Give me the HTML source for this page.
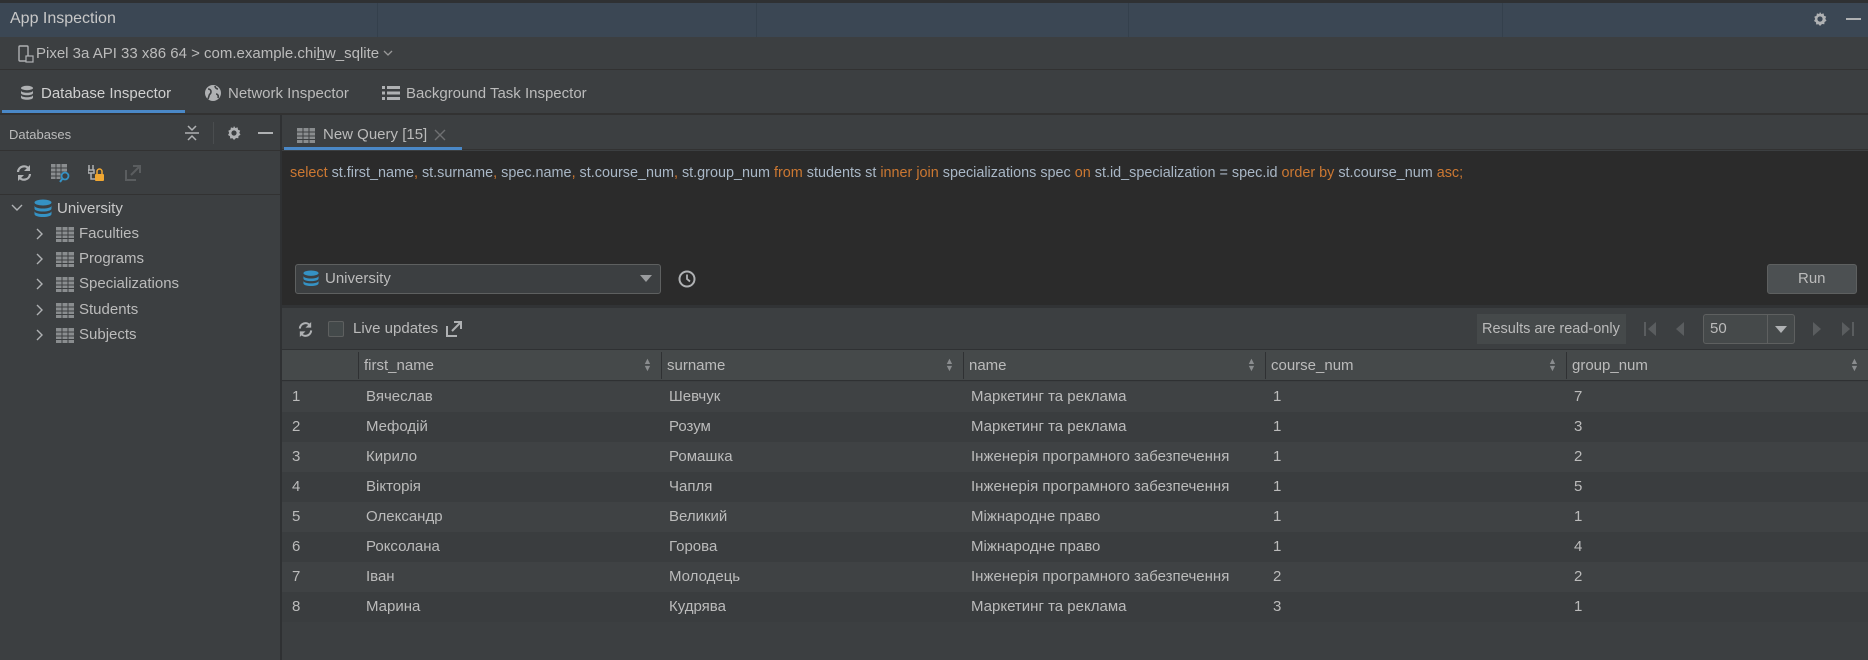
<!DOCTYPE html>
<html><head><meta charset="utf-8"><style>
*{margin:0;padding:0;box-sizing:border-box}
body{width:1868px;height:660px;overflow:hidden;background:#3c3f41;font-family:"Liberation Sans","DejaVu Sans",sans-serif;font-size:15px;color:#bbbbbb;position:relative}
.a{position:absolute}
.t{position:absolute;white-space:nowrap;line-height:18px}
.k{color:#cc7832}
svg{position:absolute}
.row{position:absolute;left:282px;width:1586px;height:30px}
.row span{position:absolute;top:6px;white-space:nowrap}
.hd span{position:absolute;top:7px}
</style></head><body>
<div class="a" style="left:0;top:0;width:1868px;height:3px;background:#2f3133"></div>
<div class="a" style="left:0;top:3px;width:1868px;height:34px;background:#3b4754"></div>
<div class="a" style="left:377px;top:3px;width:1px;height:34px;background:#34404c"></div>
<div class="a" style="left:756px;top:3px;width:1px;height:34px;background:#34404c"></div>
<div class="a" style="left:1128px;top:3px;width:1px;height:34px;background:#34404c"></div>
<div class="a" style="left:1502px;top:3px;width:1px;height:34px;background:#34404c"></div>
<div class="t" style="left:10px;top:10px;font-size:16px;color:#c8c8c8">App Inspection</div>
<svg style="left:1812px;top:11px" width="16" height="16" viewBox="0 0 16 16"><path d="M8 1l1.3 2 2.3-.6.4 2.3 2.2.9-.9 2.2 1.2 2-2 1.2-.2 2.3-2.3-.3L8 15l-1.5-1.8-2.3.3-.2-2.3-2-1.2 1.2-2-.9-2.2L4.5 4.7l.4-2.3 2.3.6z" fill="#afb1b3"/><circle cx="8" cy="8" r="2.6" fill="#3b4754"/></svg>
<div class="a" style="left:1846px;top:18px;width:15px;height:2px;background:#afb1b3"></div>
<div class="a" style="left:0;top:37px;width:1868px;height:33px;background:#3c3f41;border-bottom:1px solid #323232"></div>
<svg style="left:18px;top:45px" width="16" height="18" viewBox="0 0 16 18"><rect x="1" y="1" width="9" height="15" rx="1" fill="none" stroke="#afb1b3" stroke-width="1.4"/><rect x="8" y="11" width="7" height="6" fill="#3c3f41" stroke="#afb1b3" stroke-width="1.2"/></svg>
<div class="t" style="left:36px;top:45px">Pixel 3a API 33 x86 64 &gt; com.example.chi<u>h</u>w_sqlite</div>
<svg style="left:383px;top:49px" width="10" height="8"><path d="M1 2l4 4 4-4" fill="none" stroke="#999" stroke-width="1.3"/></svg>
<div class="a" style="left:0;top:71px;width:1868px;height:44px;background:#3c3f41;border-bottom:2px solid #323232"></div>
<div class="a" style="left:2px;top:110px;width:183px;height:3px;background:#4a88c7"></div>
<svg style="left:20px;top:85px" width="14" height="16" viewBox="0 0 14 16"><ellipse cx="7" cy="3" rx="6" ry="2.2" fill="#afb1b3"/><path d="M1 5.5c0 3 12 3 12 0v2.5c0 3-12 3-12 0zM1 10c0 3 12 3 12 0v2.5c0 3-12 3-12 0z" fill="#afb1b3"/></svg>
<div class="t" style="left:41px;top:85px;color:#d0d0d0">Database Inspector</div>
<svg style="left:204px;top:84px" width="18" height="18" viewBox="0 0 18 18"><circle cx="9" cy="9" r="8" fill="#afb1b3"/><path d="M4 5c2 0 3 1 3 3s-2 2-2 4l-1 3M11 2c0 2 2 3 3 3M12 10c1 0 3 1 2 4" fill="none" stroke="#3c3f41" stroke-width="1.6"/></svg>
<div class="t" style="left:228px;top:85px">Network Inspector</div>
<svg style="left:382px;top:86px" width="18" height="14" viewBox="0 0 18 14"><g fill="#afb1b3"><rect x="0" y="0" width="3" height="3"/><rect x="5" y="0" width="13" height="3"/><rect x="0" y="5.5" width="3" height="3"/><rect x="5" y="5.5" width="13" height="3"/><rect x="0" y="11" width="3" height="3"/><rect x="5" y="11" width="13" height="3"/></g></svg>
<div class="t" style="left:406px;top:85px">Background Task Inspector</div>
<div class="a" style="left:0;top:115px;width:282px;height:545px;background:#3c3f41;border-right:2px solid #2f3133"></div>
<div class="a" style="left:0;top:150px;width:280px;height:1px;background:#323232"></div>
<div class="a" style="left:0;top:194px;width:280px;height:1px;background:#323232"></div>
<div class="t" style="left:9px;top:126px;font-size:13px">Databases</div>
<svg style="left:185px;top:124px" width="14" height="18" viewBox="0 0 14 18"><path d="M0 9h14M3 2l4 4 4-4M3 16l4-4 4 4" fill="none" stroke="#afb1b3" stroke-width="1.5"/></svg>
<div class="a" style="left:213px;top:122px;width:1px;height:22px;background:#4a4d4f"></div>
<svg style="left:226px;top:125px" width="16" height="16" viewBox="0 0 16 16"><path d="M8 1l1.3 2 2.3-.6.4 2.3 2.2.9-.9 2.2 1.2 2-2 1.2-.2 2.3-2.3-.3L8 15l-1.5-1.8-2.3.3-.2-2.3-2-1.2 1.2-2-.9-2.2L4.5 4.7l.4-2.3 2.3.6z" fill="#afb1b3"/><circle cx="8" cy="8" r="2.6" fill="#3c3f41"/></svg>
<div class="a" style="left:258px;top:132px;width:15px;height:2px;background:#afb1b3"></div>
<svg style="left:15px;top:164px" width="18" height="18" viewBox="0 0 18 18"><path d="M3 8a6 6 0 0 1 11-3M15 10a6 6 0 0 1-11 3" fill="none" stroke="#afb1b3" stroke-width="2.2"/><path d="M15 1v6h-6zM3 17v-6h6z" fill="#afb1b3"/></svg>
<svg style="left:51px;top:164px" width="20" height="19" viewBox="0 0 20 19"><rect x="0" y="0" width="16" height="15" fill="#8a8d8f"/><path d="M0 4h16M0 8h16M0 12h16M5 0v15M10 0v15" stroke="#3c3f41" stroke-width="1"/><circle cx="14" cy="12" r="3.5" fill="#3c3f41" stroke="#3592c4" stroke-width="1.8"/><path d="M11.5 14.5L9 18" stroke="#3592c4" stroke-width="2"/></svg>
<svg style="left:88px;top:164px" width="17" height="18" viewBox="0 0 17 18"><path d="M1 1v5M5 1v5M0 6h6v3H0zM3 9v6h4" fill="none" stroke="#afb1b3" stroke-width="1.5"/><rect x="7" y="10" width="9" height="7" rx="1" fill="#f0a732"/><path d="M9 10V7.5a2.5 2.5 0 0 1 5 0V10" fill="none" stroke="#f0a732" stroke-width="1.5"/></svg>
<svg style="left:125px;top:165px" width="16" height="16" viewBox="0 0 16 16"><path d="M1 5v10h10M6 10L15 1M8 1h7v7" fill="none" stroke="#5a5d5f" stroke-width="2"/></svg>
<svg style="left:11px;top:204px" width="12" height="8"><path d="M1 1l5 5 5-5" fill="none" stroke="#afb1b3" stroke-width="1.4"/></svg>
<svg style="left:34px;top:199px" width="18" height="19" viewBox="0 0 18 19"><ellipse cx="9" cy="3.5" rx="8.5" ry="3" fill="#3592c4"/><path d="M.5 6.5c0 4 17 4 17 0v3c0 4-17 4-17 0zM.5 12c0 4 17 4 17 0v3c0 4-17 4-17 0z" fill="#3592c4"/></svg>
<div class="t" style="left:57px;top:200px;color:#c8c8c8">University</div>
<div id="tree"></div>
<div class="a" style="left:282px;top:115px;width:1586px;height:35px;background:#3c3f41;border-bottom:1px solid #323232"></div>
<div class="a" style="left:284px;top:147px;width:178px;height:3px;background:#4a88c7"></div>
<svg style="left:297px;top:128px" width="18" height="15" viewBox="0 0 18 15"><rect x="0" y="0" width="18" height="15" fill="#8a8d8f"/><path d="M0 4h18M0 8h18M0 11.5h18M6 0v15M12 0v15" stroke="#3c3f41" stroke-width="1"/></svg>
<div class="t" style="left:323px;top:126px;font-size:15px">New Query [15]</div>
<svg style="left:434px;top:129px" width="12" height="12"><path d="M1 1l10 10M11 1L1 11" stroke="#6e7072" stroke-width="1.4"/></svg>
<div class="a" style="left:282px;top:151px;width:1586px;height:154px;background:#2b2b2b"></div>
<div class="t" style="left:290px;top:164px;font-size:14.4px;color:#a9b7c6"><span class="k">select</span> st.first_name<span class="k">,</span> st.surname<span class="k">,</span> spec.name<span class="k">,</span> st.course_num<span class="k">,</span> st.group_num <span class="k">from</span> students st <span class="k">inner join</span> specializations spec <span class="k">on</span> st.id_specialization = spec.id <span class="k">order by</span> st.course_num <span class="k">asc;</span></div>
<div class="a" style="left:295px;top:264px;width:366px;height:30px;background:#3c3f41;border:1px solid #5e6060;border-radius:3px"></div>
<svg style="left:303px;top:269px" width="16" height="19" viewBox="0 0 18 19"><ellipse cx="9" cy="3.5" rx="8.5" ry="3" fill="#3592c4"/><path d="M.5 6.5c0 4 17 4 17 0v3c0 4-17 4-17 0zM.5 12c0 4 17 4 17 0v3c0 4-17 4-17 0z" fill="#3592c4"/></svg>
<div class="t" style="left:325px;top:270px">University</div>
<svg style="left:640px;top:275px" width="12" height="8"><path d="M0 0h12L6 7z" fill="#9a9c9e"/></svg>
<svg style="left:678px;top:270px" width="18" height="18" viewBox="0 0 18 18"><circle cx="9" cy="9" r="7.5" fill="none" stroke="#afb1b3" stroke-width="2"/><path d="M9 4.5V9l3 2.5" fill="none" stroke="#afb1b3" stroke-width="1.8"/></svg>
<div class="a" style="left:1767px;top:264px;width:90px;height:30px;background:#4c5052;border:1px solid #5e6060;border-radius:3px"></div>
<div class="t" style="left:1798px;top:270px">Run</div>
<div class="a" style="left:282px;top:305px;width:1586px;height:3px;background:#313335"></div>
<svg style="left:297px;top:321px" width="17" height="17" viewBox="0 0 18 18"><path d="M3 8a6 6 0 0 1 11-3M15 10a6 6 0 0 1-11 3" fill="none" stroke="#afb1b3" stroke-width="2.2"/><path d="M15 1v6h-6zM3 17v-6h6z" fill="#afb1b3"/></svg>
<div class="a" style="left:328px;top:321px;width:16px;height:16px;background:#43494a;border:1px solid #5e6060;border-radius:2px"></div>
<div class="t" style="left:353px;top:320px">Live updates</div>
<svg style="left:446px;top:321px" width="16" height="16" viewBox="0 0 16 16"><path d="M1 5v10h10M6 10L15 1M8 1h7v7" fill="none" stroke="#afb1b3" stroke-width="2"/></svg>
<div class="a" style="left:1477px;top:314px;width:149px;height:30px;background:#45494a"></div>
<div class="t" style="left:1482px;top:320px;font-size:14.5px">Results are read-only</div>
<svg style="left:1644px;top:322px" width="12" height="14"><rect x="0" y="0" width="2" height="14" fill="#5a5d5f"/><path d="M12 0v14L4 7z" fill="#5a5d5f"/></svg>
<svg style="left:1676px;top:322px" width="10" height="14"><path d="M8 0v14L0 7z" fill="#5a5d5f"/></svg>
<div class="a" style="left:1703px;top:314px;width:92px;height:30px;background:#45494a;border:1px solid #5e6060;border-radius:3px"></div>
<div class="a" style="left:1767px;top:315px;width:1px;height:28px;background:#5e6060"></div>
<div class="t" style="left:1710px;top:320px">50</div>
<svg style="left:1775px;top:326px" width="12" height="8"><path d="M0 0h12L6 7z" fill="#b0b2b4"/></svg>
<svg style="left:1813px;top:322px" width="10" height="14"><path d="M0 0v14L8 7z" fill="#5a5d5f"/></svg>
<svg style="left:1842px;top:322px" width="12" height="14"><path d="M0 0v14L8 7z" fill="#5a5d5f"/><rect x="10" y="0" width="2" height="14" fill="#5a5d5f"/></svg>
<div class="a" style="left:282px;top:349px;width:1586px;height:1px;background:#2f3133"></div>
<div class="row hd" style="top:350px;height:31px;background:#45494a;border-bottom:1px solid #2f3133">
<div class="a" style="left:76px;top:2px;width:1px;height:27px;background:#2f3133"></div>
<div class="a" style="left:379px;top:2px;width:1px;height:27px;background:#2f3133"></div>
<div class="a" style="left:681px;top:2px;width:1px;height:27px;background:#2f3133"></div>
<div class="a" style="left:983px;top:2px;width:1px;height:27px;background:#2f3133"></div>
<div class="a" style="left:1284px;top:2px;width:1px;height:27px;background:#2f3133"></div>
<span style="left:82px">first_name</span><span style="left:385px">surname</span><span style="left:687px">name</span><span style="left:989px">course_num</span><span style="left:1290px">group_num</span>
<span style="left:361px;top:8px;font-size:9px;line-height:7px;color:#8a8d8f">▲<br>▼</span>
<span style="left:663px;top:8px;font-size:9px;line-height:7px;color:#8a8d8f">▲<br>▼</span>
<span style="left:965px;top:8px;font-size:9px;line-height:7px;color:#8a8d8f">▲<br>▼</span>
<span style="left:1266px;top:8px;font-size:9px;line-height:7px;color:#8a8d8f">▲<br>▼</span>
<span style="left:1568px;top:8px;font-size:9px;line-height:7px;color:#8a8d8f">▲<br>▼</span>
</div>
<div id="rows"></div>
<script>
var tr=["Faculties","Programs","Specializations","Students","Subjects"],h="";
tr.forEach(function(n,i){var y=225+i*25.2;
h+='<svg style="left:36px;top:'+(y+3)+'px" width="8" height="12"><path d="M1 1l5 5-5 5" fill="none" stroke="#afb1b3" stroke-width="1.4"/></svg>'+
'<svg style="left:56px;top:'+(y+2)+'px" width="18" height="15" viewBox="0 0 18 15"><rect x="0" y="0" width="18" height="15" fill="#8a8d8f"/><path d="M0 4h18M0 8h18M0 11.5h18M6 0v15M12 0v15" stroke="#3c3f41" stroke-width="1"/></svg>'+
'<div class="t" style="left:79px;top:'+y+'px">'+n+'</div>';});
document.getElementById("tree").outerHTML=h;
var d=[["Вячеслав","Шевчук","Маркетинг та реклама",1,7],["Мефодій","Розум","Маркетинг та реклама",1,3],["Кирило","Ромашка","Інженерія програмного забезпечення",1,2],["Вікторія","Чапля","Інженерія програмного забезпечення",1,5],["Олександр","Великий","Міжнародне право",1,1],["Роксолана","Горова","Міжнародне право",1,4],["Іван","Молодець","Інженерія програмного забезпечення",2,2],["Марина","Кудрява","Маркетинг та реклама",3,1]];
h="";d.forEach(function(r,i){h+='<div class="row" style="top:'+(382+i*30)+'px;background:'+(i%2?'#3a3d3f':'#3f4244')+'"><span style="left:10px">'+(i+1)+'</span><span style="left:84px">'+r[0]+'</span><span style="left:387px">'+r[1]+'</span><span style="left:689px">'+r[2]+'</span><span style="left:991px">'+r[3]+'</span><span style="left:1292px">'+r[4]+'</span></div>';});
document.getElementById("rows").outerHTML=h;
</script>
</body></html>
